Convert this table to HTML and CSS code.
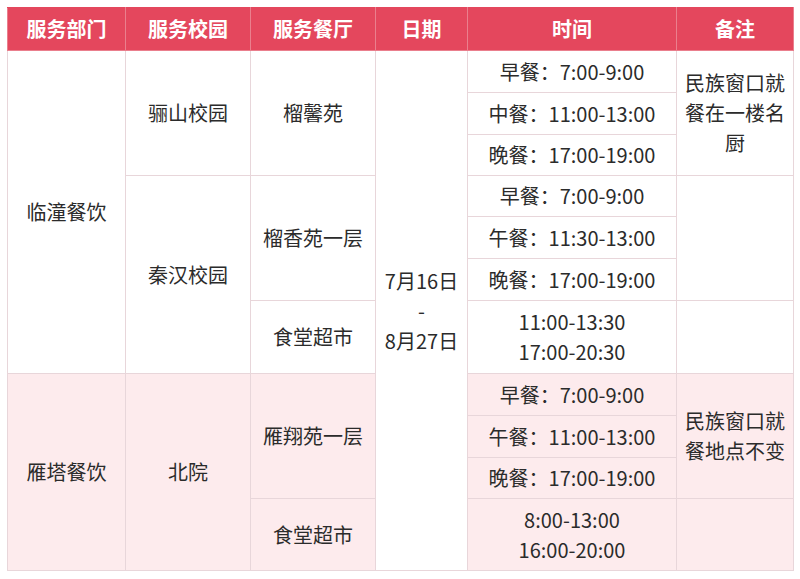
FILE: index.html
```html
<!DOCTYPE html>
<html lang="zh-CN">
<head>
<meta charset="utf-8">
<title>服务安排</title>
<link rel="stylesheet" href="styles.css">
</head>
<body>
<table class="sched">
  <colgroup>
    <col class="c1"><col class="c2"><col class="c3"><col class="c4"><col class="c5"><col class="c6">
  </colgroup>
  <thead>
    <tr class="head">
      <th>服务部门</th><th>服务校园</th><th>服务餐厅</th><th>日期</th><th>时间</th><th>备注</th>
    </tr>
  </thead>
  <tbody>
    <tr class="r42">
      <td rowspan="7">临潼餐饮</td>
      <td rowspan="3">骊山校园</td>
      <td rowspan="3">榴馨苑</td>
      <td rowspan="11" class="date">7月16日<br>-<br>8月27日</td>
      <td>早餐：7:00-9:00</td>
      <td rowspan="3" class="note">民族窗口就<br>餐在一楼名<br>厨</td>
    </tr>
    <tr class="r42"><td>中餐：11:00-13:00</td></tr>
    <tr class="r41"><td>晚餐：17:00-19:00</td></tr>
    <tr class="r41">
      <td rowspan="4">秦汉校园</td>
      <td rowspan="3">榴香苑一层</td>
      <td>早餐：7:00-9:00</td>
      <td rowspan="3"></td>
    </tr>
    <tr class="r42"><td>午餐：11:30-13:00</td></tr>
    <tr class="r42"><td>晚餐：17:00-19:00</td></tr>
    <tr class="r73">
      <td>食堂超市</td>
      <td class="multi">11:00-13:30<br>17:00-20:30</td>
      <td></td>
    </tr>
    <tr class="r42 pink">
      <td rowspan="4">雁塔餐饮</td>
      <td rowspan="4">北院</td>
      <td rowspan="3">雁翔苑一层</td>
      <td>早餐：7:00-9:00</td>
      <td rowspan="3" class="note">民族窗口就<br>餐地点不变</td>
    </tr>
    <tr class="r42 pink"><td>午餐：11:00-13:00</td></tr>
    <tr class="r41 pink"><td>晚餐：17:00-19:00</td></tr>
    <tr class="r72 pink">
      <td>食堂超市</td>
      <td class="multi">8:00-13:00<br>16:00-20:00</td>
      <td></td>
    </tr>
  </tbody>
</table>
</body>
</html>
```
FILE: styles.css
```css
html, body {
  margin: 0;
  padding: 0;
  background: #ffffff;
}
body {
  padding: 7px 0 0 7px;
  font-family: "Noto Sans CJK SC", "Noto Sans", sans-serif;
  color: #2b2b2b;
}
.sched {
  border-collapse: collapse;
  table-layout: fixed;
  width: 786px;
  border: 1px solid #c4acb4;
}
.c1 { width: 118px; }
.c2 { width: 125px; }
.c3 { width: 125px; }
.c4 { width: 92px; }
.c5 { width: 209px; }
.c6 { width: 117px; }
.sched th, .sched td {
  border: 1px solid #e8d6da;
  text-align: center;
  vertical-align: middle;
  padding: 0;
  font-size: 20px;
  line-height: 30px;
  font-weight: 400;
  white-space: nowrap;
}
.head { height: 43px; }
.head th {
  background: #e4475d;
  color: #ffffff;
  font-weight: 700;
  font-size: 20px;
  border-color: #ea7f8d;
  border-top-color: #e4475d;
}
.r41 { height: 41px; }
.r42 { height: 42px; }
.r72 { height: 72px; }
.r73 { height: 73px; }
.pink td { background: #fdebed; }
.sched td.date { background: #ffffff; }
.note { line-height: 32px; }
.multi { line-height: 30px; }
```
